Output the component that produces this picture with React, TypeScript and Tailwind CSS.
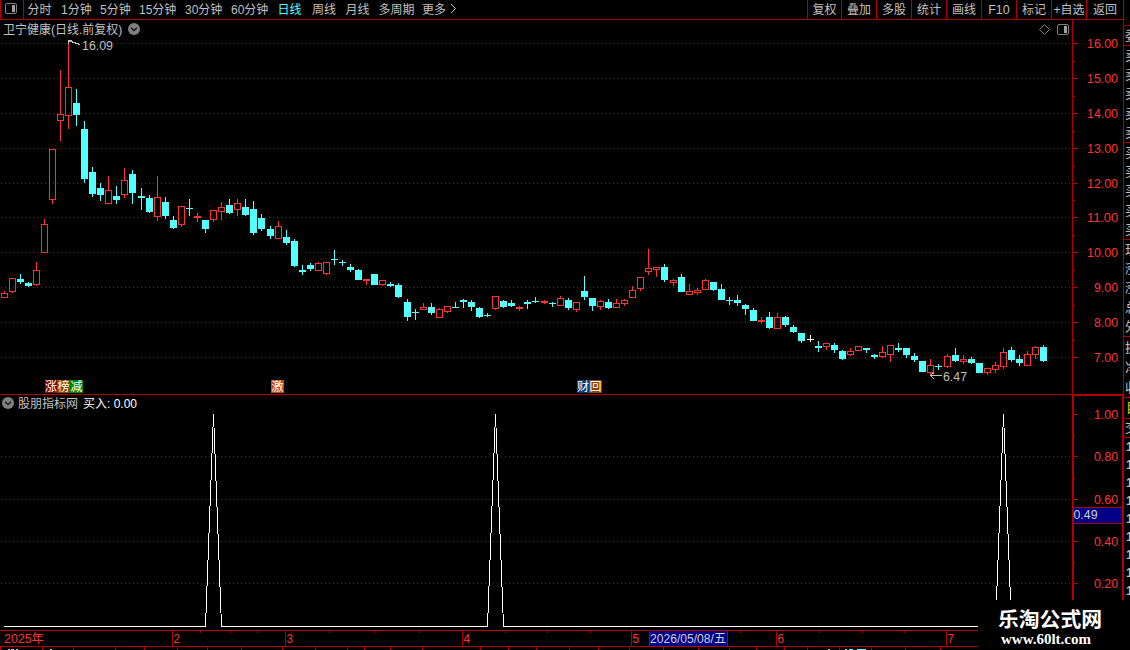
import React from "react";

type Kind = "r" | "c" | "w";
/** [centre x, wick top, body top, body bottom, wick bottom, kind] */
type Candle = [number, number, number, number, number, Kind];

const CANDLES: Candle[] = [
  [4, 291, 293, 298, 298, "r"], [12, 278, 278, 292, 293, "r"], [20, 274, 279, 282, 284, "c"], [28, 282, 283, 286, 287, "c"],
  [36, 262, 270, 285, 286, "r"], [44, 219, 224, 253, 253, "r"], [52, 149, 149, 200, 204, "r"], [60, 70, 114, 121, 141, "r"],
  [68, 40, 87, 116, 129, "r"], [76, 89, 103, 115, 126, "c"], [84, 121, 129, 179, 183, "c"], [92, 167, 172, 194, 197, "c"],
  [100, 183, 188, 195, 201, "c"], [108, 176, 190, 204, 204, "r"], [116, 186, 196, 200, 204, "c"], [124, 168, 180, 195, 198, "r"],
  [132, 170, 174, 193, 204, "c"], [141, 188, 196, 198, 210, "c"], [149, 195, 198, 212, 213, "c"], [157, 176, 197, 217, 221, "r"],
  [165, 197, 202, 216, 219, "c"], [173, 216, 220, 228, 229, "c"], [181, 206, 206, 225, 227, "r"], [189, 199, 208, 209, 216, "c"],
  [197, 213, 216, 218, 222, "r"], [205, 220, 220, 229, 233, "c"], [213, 210, 210, 220, 222, "r"], [221, 202, 207, 212, 220, "r"],
  [229, 199, 205, 213, 214, "c"], [237, 199, 203, 210, 216, "r"], [245, 199, 207, 215, 216, "c"], [253, 201, 209, 233, 235, "c"],
  [261, 214, 218, 229, 231, "c"], [270, 226, 229, 236, 239, "c"], [278, 221, 226, 239, 239, "r"], [286, 230, 237, 243, 245, "c"],
  [294, 239, 241, 266, 267, "c"], [302, 265, 270, 272, 275, "c"], [310, 263, 265, 269, 271, "c"], [318, 262, 263, 271, 271, "r"],
  [326, 262, 262, 274, 275, "r"], [334, 250, 259, 260, 265, "c"], [342, 260, 262, 263, 266, "c"], [350, 264, 267, 270, 272, "c"],
  [358, 269, 270, 280, 280, "c"], [366, 279, 279, 281, 285, "r"], [374, 274, 274, 285, 285, "c"], [382, 280, 280, 285, 286, "r"],
  [390, 282, 284, 286, 287, "c"], [398, 283, 285, 297, 298, "c"], [407, 299, 302, 317, 321, "c"], [415, 309, 312, 313, 320, "c"],
  [423, 303, 307, 310, 310, "r"], [431, 303, 307, 313, 315, "c"], [439, 308, 309, 318, 318, "r"], [447, 306, 306, 312, 313, "r"],
  [455, 302, 307, 308, 308, "c"], [463, 299, 300, 302, 308, "c"], [471, 300, 302, 307, 311, "c"], [479, 307, 308, 317, 318, "c"],
  [487, 313, 315, 316, 317, "c"], [495, 296, 296, 309, 310, "r"], [503, 300, 301, 307, 308, "c"], [511, 300, 303, 306, 307, "c"],
  [519, 306, 307, 309, 311, "r"], [527, 300, 302, 304, 309, "c"], [535, 297, 301, 302, 303, "c"], [544, 300, 301, 303, 304, "r"],
  [552, 302, 303, 304, 307, "c"], [560, 296, 298, 306, 306, "r"], [568, 298, 300, 308, 310, "c"], [576, 302, 302, 310, 312, "r"],
  [584, 276, 291, 297, 300, "c"], [592, 298, 298, 306, 311, "c"], [600, 300, 301, 307, 310, "r"], [608, 299, 302, 308, 309, "c"],
  [616, 299, 303, 308, 308, "r"], [624, 299, 300, 304, 306, "r"], [632, 286, 290, 298, 298, "r"], [640, 277, 277, 289, 291, "r"],
  [648, 249, 268, 272, 275, "r"], [656, 267, 267, 270, 277, "r"], [664, 264, 267, 280, 282, "c"], [673, 279, 280, 283, 286, "r"],
  [681, 274, 277, 292, 292, "c"], [689, 284, 291, 295, 295, "r"], [697, 288, 290, 293, 295, "r"], [705, 279, 280, 290, 290, "r"],
  [713, 282, 282, 290, 291, "c"], [721, 284, 289, 300, 300, "c"], [729, 297, 300, 301, 305, "c"], [737, 295, 300, 303, 306, "c"],
  [745, 304, 305, 309, 315, "c"], [753, 308, 310, 321, 321, "c"], [761, 317, 320, 322, 324, "r"], [769, 312, 317, 328, 329, "c"],
  [777, 313, 317, 329, 329, "r"], [785, 316, 317, 325, 327, "c"], [793, 325, 327, 332, 333, "c"], [801, 333, 333, 341, 343, "c"],
  [810, 335, 339, 340, 342, "w"], [818, 341, 346, 348, 352, "c"], [826, 343, 343, 347, 350, "r"], [834, 343, 345, 350, 353, "c"],
  [842, 350, 351, 359, 360, "c"], [850, 348, 351, 355, 356, "r"], [858, 346, 346, 351, 351, "r"], [866, 348, 348, 350, 353, "c"],
  [874, 354, 355, 357, 359, "c"], [882, 346, 352, 357, 358, "r"], [890, 345, 345, 355, 362, "r"], [898, 343, 348, 350, 352, "c"],
  [906, 348, 348, 355, 358, "c"], [914, 353, 356, 360, 362, "c"], [922, 361, 361, 372, 372, "c"], [930, 359, 365, 373, 375, "r"],
  [938, 364, 366, 367, 370, "c"], [947, 354, 356, 367, 368, "r"], [955, 348, 355, 361, 362, "c"], [963, 355, 359, 362, 364, "r"],
  [971, 357, 359, 363, 364, "c"], [979, 363, 363, 373, 373, "c"], [987, 368, 368, 373, 375, "r"], [995, 362, 365, 370, 373, "r"],
  [1003, 348, 352, 367, 369, "r"], [1011, 347, 350, 360, 362, "c"], [1019, 355, 359, 363, 366, "c"], [1027, 351, 354, 366, 366, "r"],
  [1035, 346, 347, 355, 359, "r"], [1043, 345, 347, 361, 362, "c"],
];

const COLORS: Record<Kind, string> = { r: "#ff3232", c: "#54ffff", w: "#ffffff" };
const LINE = "#b00000";

const PRICE_ROWS = [43, 78, 113, 148, 183, 217, 252, 287, 322, 357].map((y, i) => ({ y, label: `${16 - i}.00` }));
const PRICE_MINOR = [61, 96, 131, 166, 200, 235, 270, 305, 340];
const IND_ROWS = [
  { y: 414, label: "1.00" },
  { y: 456, label: "0.80" },
  { y: 499, label: "0.60" },
  { y: 541, label: "0.40" },
  { y: 583, label: "0.20" },
];
const IND_MINOR = [435, 478, 562];

/** One-pixel outline built from four filled edges, so that every side keeps its full colour. */
function Frame({ x, y, w, h, fill }: { x: number; y: number; w: number; h: number; fill: string }) {
  return (
    <g fill={fill}>
      <rect x={x} y={y} width={w} height={1} />
      <rect x={x} y={y + h - 1} width={w} height={1} />
      <rect x={x} y={y} width={1} height={h} />
      <rect x={x + w - 1} y={y} width={1} height={h} />
    </g>
  );
}

function CandleShape({ d }: { d: Candle }) {
  const [x, wt, bt, bb, wb, k] = d;
  const f = COLORS[k];
  const hollow = k === "r" && bb - bt > 2;
  return (
    <g fill={f}>
      {bt > wt && <rect x={x} y={wt} width={1} height={bt - wt} />}
      {wb > bb && <rect x={x} y={bb} width={1} height={wb - bb} />}
      {hollow ? <Frame x={x - 3} y={bt} w={7} h={bb - bt} fill={f} /> : <rect x={x - 3} y={bt} width={7} height={bb - bt} />}
    </g>
  );
}

function Dots({ y }: { y: number }) {
  return <line x1={1} x2={1072} y1={y + 0.5} y2={y + 0.5} stroke="#a80808" strokeWidth={1} strokeDasharray="1 3" />;
}

function Num({ x, y, children, w, fill = "#ff3232" }: { x: number; y: number; w: number; children: string; fill?: string }) {
  return (
    <text x={x} y={y} fontSize={12.5} fill={fill} textLength={w} lengthAdjust="spacingAndGlyphs">
      {children}
    </text>
  );
}

function PanelIcon() {
  return (
    <svg width="12" height="12" viewBox="0 0 12 12" className="block shrink-0">
      <rect x="0.5" y="0.5" width="11" height="10" rx="1.5" fill="none" stroke="#808080" />
      <rect x="7" y="2" width="3" height="7" fill="#a0a0a0" />
    </svg>
  );
}

function ChevronBadge() {
  return (
    <svg width="12" height="12" viewBox="0 0 12 12" className="block shrink-0">
      <circle cx="6" cy="6" r="6" fill="#808080" />
      <path d="M3 4.7 6 7.5 9 4.7" fill="none" stroke="#151515" strokeWidth="1.3" />
    </svg>
  );
}

const PERIODS = [
  { t: "分时", w: "w-[33.5px]" },
  { t: "1分钟", w: "w-[39px]" },
  { t: "5分钟", w: "w-[39px]" },
  { t: "15分钟", w: "w-[46px]" },
  { t: "30分钟", w: "w-[46px]" },
  { t: "60分钟", w: "w-[46.5px]" },
  { t: "日线", w: "w-[34.5px] text-[#54ffff]" },
  { t: "周线", w: "w-[33.5px]" },
  { t: "月线", w: "w-[33px]" },
  { t: "多周期", w: "w-[43.5px]" },
  { t: "更多", w: "w-[27px]" },
];

const TOOLS = [
  { t: "复权", w: "w-[34px]" },
  { t: "叠加", w: "w-[35px]" },
  { t: "多股", w: "w-[35px]" },
  { t: "统计", w: "w-[35px]" },
  { t: "画线", w: "w-[35px]" },
  { t: "F10", w: "w-[35px] text-[12.5px]" },
  { t: "标记", w: "w-[35px]" },
  { t: "+自选", w: "w-[35px]" },
  { t: "返回", w: "w-[37px]" },
];

function Toolbar() {
  return (
    <div className="flex h-5 shrink-0 border-b border-[#b00000] text-[12px] leading-[20px] text-[#c0c0c0]">
      <div className="flex w-6 shrink-0 border-x border-[#b00000] pl-1 pt-[3px]">
        <PanelIcon />
      </div>
      <div className="flex flex-1 pl-[3.5px]">
        {PERIODS.map((p) => (
          <span key={p.t} className={`shrink-0 whitespace-nowrap ${p.w}`}>
            {p.t}
          </span>
        ))}
        <svg width="8" height="12" viewBox="0 0 8 12" className="mt-[3px]">
          <path d="M2 1 6.5 5.5 2 10" fill="none" stroke="#c0c0c0" />
        </svg>
      </div>
      {TOOLS.map((t) => (
        <span key={t.t} className={`h-[19px] shrink-0 whitespace-nowrap border-l border-[#b00000] text-center ${t.w}`}>
          {t.t}
        </span>
      ))}
    </div>
  );
}

function PriceSvg() {
  return (
    <svg width="1123" height="374" viewBox="0 20 1123 374" shapeRendering="crispEdges" className="block [grid-area:1/1]">
      {PRICE_ROWS.map((r) => (
        <g key={r.y}>
          <Dots y={r.y} />
          <rect x={1073} y={r.y} width={5} height={1} fill={LINE} />
          <Num x={r.label.length > 4 ? 1087 : 1094} y={r.y + 5} w={r.label.length > 4 ? 31 : 24}>
            {r.label}
          </Num>
        </g>
      ))}
      {PRICE_MINOR.map((y) => (
        <rect key={y} x={1073} y={y} width={2} height={1} fill={LINE} />
      ))}
      <rect x={1072} y={20} width={1} height={374} fill={LINE} />
      {CANDLES.map((d) => (
        <CandleShape key={d[0]} d={d} />
      ))}
      <path d="M72 40.5H68.5V44M69 41.5H72V42.5H75V43.5H78V44.5H80" fill="none" stroke="#c0c0c0" />
      <Num x={82} y={50} w={31} fill="#c0c0c0">16.09</Num>
      <path d="M930 375.5H942M934 372.5 930.5 375.5 934 379" fill="none" stroke="#c0c0c0" />
      <Num x={943} y={381} w={24} fill="#c0c0c0">6.47</Num>
    </svg>
  );
}

function IndicatorSvg() {
  return (
    <svg width="1124" height="236" viewBox="0 394 1124 236" shapeRendering="crispEdges" className="block [grid-area:1/1]">
      <rect x={0} y={394} width={1124} height={1} fill={LINE} />
      <rect x={1072} y={395} width={52} height={1} fill={LINE} />
      <rect x={1072} y={394} width={2} height={236} fill={LINE} />
      <rect x={1122} y={394} width={2} height={236} fill={LINE} />
      {IND_ROWS.map((r) => (
        <g key={r.y}>
          {r.y > 414 && <Dots y={r.y} />}
          <rect x={1074} y={r.y} width={4} height={1} fill={LINE} />
          <Num x={1094} y={r.y + 5} w={24}>
            {r.label}
          </Num>
        </g>
      ))}
      {IND_MINOR.map((y) => (
        <rect key={y} x={1074} y={y} width={1} height={1} fill={LINE} />
      ))}
      <rect x={1074} y={507} width={48} height={17} fill={LINE} />
      <rect x={1074} y={508} width={48} height={15} fill="#000088" />
      <Num x={1073.5} y={519} w={24} fill="#d0d0d0">0.49</Num>
      <path
        d="M4 626.5H205.5L213.5 414L221.5 626.5H487.5L495.5 414L503.5 626.5H995.5L1003.5 414L1011.5 626.5"
        fill="none"
        stroke="#fff"
      />
    </svg>
  );
}

const MONTHS = [
  { x: 173, label: "2" },
  { x: 286, label: "3" },
  { x: 463, label: "4" },
  { x: 632, label: "5" },
  { x: 777, label: "6" },
  { x: 947, label: "7" },
];
const WEEK_TICKS = [200, 230, 257, 329, 374, 419, 505, 547, 590, 740, 819, 862, 904];
const FOOT_TICKS = [
  0, 42, 73, 115, 144, 177, 207, 241, 282, 315, 347, 364, 390, 422, 480, 508, 536, 569, 598, 629, 663, 698, 729, 756, 784, 807, 839, 871, 905, 940,
];

function DateAxis() {
  return (
    <svg width="1124" height="20" viewBox="0 630 1124 20" shapeRendering="crispEdges" className="block shrink-0">
      <rect x={0} y={630} width={1124} height={1} fill={LINE} />
      <rect x={0} y={646} width={1124} height={1} fill={LINE} />
      {WEEK_TICKS.map((x) => (
        <rect key={x} x={x} y={631} width={1} height={2} fill={LINE} />
      ))}
      {FOOT_TICKS.map((x) => (
        <rect key={x} x={x} y={647} width={1} height={3} fill={LINE} />
      ))}
      {MONTHS.map((m) => (
        <g key={m.x}>
          <rect x={m.x - 1} y={631} width={1} height={15} fill={LINE} />
          <Num x={m.x + 0.5} y={643} w={6.5}>
            {m.label}
          </Num>
        </g>
      ))}
      <Num x={4} y={643} w={40}>2025年</Num>
      <rect x={649} y={631} width={79} height={15} fill={LINE} />
      <rect x={650} y={631} width={77} height={15} fill="#000088" />
      <Num x={650} y={642.5} w={76} fill="#d0d0d0">2026/05/08/五</Num>
      <g fill="#c0c0c0">
        <rect x={8} y={649} width={2} height={1} />
        <rect x={11} y={649} width={3} height={1} />
        <rect x={16} y={649} width={2} height={1} />
        <rect x={50} y={649} width={2} height={1} />
        <rect x={828} y={649} width={2} height={1} />
      </g>
      <g fill="#54ffff">
        <rect x={845} y={649} width={2} height={1} />
        <rect x={849} y={649} width={4} height={1} />
        <rect x={857} y={649} width={9} height={1} />
      </g>
    </svg>
  );
}

function Badge({ t, c }: { t: string; c: string }) {
  return (
    <span className={`flex h-[13px] justify-center overflow-hidden text-[12px] leading-[15px] text-white ${c}`}>{t}</span>
  );
}

function QuoteGroup({ rows, h, rowH }: { rows: string[]; h: string; rowH: string }) {
  return (
    <div className={`flex shrink-0 flex-col justify-around overflow-hidden border-b border-[#b00000] pl-px ${h}`}>
      {rows.map((r, i) => (
        <span key={i} className={`whitespace-nowrap ${rowH}`}>
          {r}
        </span>
      ))}
    </div>
  );
}

function QuoteStrip() {
  return (
    <div className="flex w-1.5 shrink-0 flex-col overflow-hidden text-[13px] text-[#c0c0c0]">
      <div className="h-[26px] shrink-0 border-b border-[#b00000]" />
      <QuoteGroup rows={["委"]} h="h-[20px]" rowH="leading-[18px]" />
      <QuoteGroup rows={["卖", "卖", "卖", "卖", "卖"]} h="h-[97px]" rowH="leading-[19px]" />
      <QuoteGroup rows={["买", "买", "买", "买", "买"]} h="h-[97px]" rowH="leading-[19px]" />
      <QuoteGroup rows={["现", "涨", "涨", "总", "外"]} h="h-[97px]" rowH="leading-[19px]" />
      <QuoteGroup rows={["换", "净", "收"]} h="h-[61px]" rowH="leading-[19px]" />
      <div className="h-[21px] shrink-0 border-b border-[#b00000] pl-0.5 leading-[20px] text-[#d8d800]">目</div>
      <div className="h-[19px] shrink-0 border-b border-[#b00000] pl-px leading-[18px]">交</div>
      <div className="flex flex-col pl-0.5 font-bold leading-[18px]">
        {[0, 1, 2, 3, 4, 5, 6, 7, 8].map((i) => (
          <span key={i}>1</span>
        ))}
      </div>
    </div>
  );
}

export default function App() {
  return (
    <div className="relative flex h-[650px] w-[1130px] overflow-hidden bg-black font-['Liberation_Sans','Noto_Sans_CJK_SC',sans-serif]">
      <div className="flex w-[1124px] shrink-0 flex-col">
        <div className="flex h-[394px] shrink-0 flex-col border-r border-[#b00000]">
          <Toolbar />
          <div className="grid flex-1">
            <PriceSvg />
            <div className="z-10 flex flex-col justify-between [grid-area:1/1]">
              <div className="flex h-5 items-start pl-[3px] text-[12px] leading-[20px] text-[#c0c0c0]">
                <span className="w-[125px] whitespace-nowrap">卫宁健康(日线.前复权)</span>
                <span className="pt-[3px]">
                  <ChevronBadge />
                </span>
                <span className="flex-1" />
                <div className="flex gap-[7px] pr-[54px] pt-1">
                  <svg width="11" height="11" viewBox="0 0 11 11">
                    <path d="M5.5.5 10.5 5.5 5.5 10.5 .5 5.5Z" fill="none" stroke="#808080" />
                  </svg>
                  <PanelIcon />
                </div>
              </div>
              <div className="flex h-[14px] pl-[45px]">
                <Badge t="涨" c="w-3 bg-[#8b0000]" />
                <Badge t="榜" c="w-[13px] bg-[#8b4500]" />
                <Badge t="减" c="mr-[188px] w-[13px] bg-[#008400]" />
                <Badge t="激" c="mr-[293px] w-[13px] bg-[#c04a10]" />
                <Badge t="财" c="w-3 bg-[#003a78]" />
                <Badge t="回" c="w-[13px] bg-[#8b4500]" />
              </div>
            </div>
          </div>
        </div>
        <div className="grid h-[236px] shrink-0">
          <IndicatorSvg />
          <div className="z-10 flex items-start pl-0.5 pt-[3px] text-[12px] leading-[14px] text-[#c0c0c0] [grid-area:1/1]">
            <ChevronBadge />
            <span className="ml-1 w-[65px]">股朋指标网</span>
            <span className="text-white">
              买入: <span>0.00</span>
            </span>
          </div>
        </div>
        <DateAxis />
      </div>
      <QuoteStrip />
      <div className="absolute bottom-0 right-0 z-20 flex h-[50px] w-[152px] flex-col bg-black pl-5 pt-[7px] text-white">
        <span className="whitespace-nowrap text-[20.8px] font-bold leading-[25px]">乐淘公式网</span>
        <span className="pl-[3px] font-['Liberation_Serif',serif] text-[15px] font-bold leading-[15px]">www.60lt.com</span>
      </div>
    </div>
  );
}
